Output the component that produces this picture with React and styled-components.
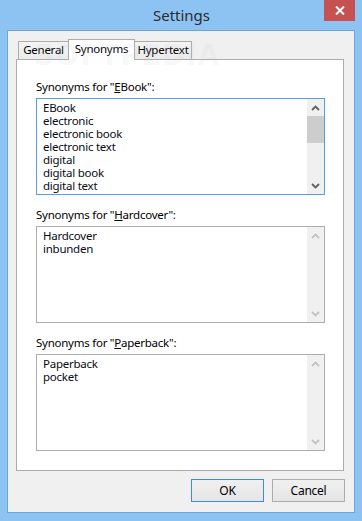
import React from 'react'
import styled, { createGlobalStyle } from 'styled-components'

const GlobalStyle = createGlobalStyle`
  html, body {
    margin: 0;
    padding: 0;
    background: #8dc3f3;
  }
  body {
    font-family: "Noto Sans", "Open Sans", sans-serif;
    font-size: 11.5px;
    letter-spacing: -0.25px;
    color: #000;
  }
`

const Window = styled.div`
  width: 362px;
  height: 521px;
  box-sizing: border-box;
  background: #8dc3f3;
  display: flex;
  flex-direction: column;
  padding: 0 7px 8px;
`

const TitleBar = styled.div`
  height: 30px;
  display: grid;
  grid-template-columns: 1fr auto 1fr;
  align-items: start;
  margin: 0 -7px;
`

const Title = styled.div`
  grid-column: 2;
  font-size: 15px;
  letter-spacing: 0;
  line-height: 30px;
  color: #2b2b2b;
  padding-left: 1px;
`

const CloseButton = styled.div`
  grid-column: 3;
  justify-self: end;
  margin-right: 7px;
  width: 31px;
  height: 21px;
  background: #c75050;
  display: flex;
  align-items: center;
  justify-content: center;
`

const Client = styled.div`
  flex: 1;
  position: relative;
  background: #f0f0f0;
  border: 1px solid #6fa4d6;
  display: flex;
  flex-direction: column;
  padding: 8px 10px 0 8px;
`

const Watermark = styled.div`
  position: absolute;
  left: 26px;
  top: 8px;
  font-family: "DejaVu Sans", sans-serif;
  font-weight: bold;
  font-size: 28px;
  letter-spacing: 1px;
  color: rgba(200, 200, 200, 0.12);
  pointer-events: none;
  z-index: 3;
`

const TabStrip = styled.div`
  height: 20px;
  display: flex;
  align-items: flex-end;
  padding-left: 2px;
`

const Tab = styled.div`
  box-sizing: border-box;
  width: ${p => p.$w}px;
  height: ${p => (p.$active ? 21 : 18)}px;
  margin-left: -1px;
  margin-bottom: ${p => (p.$active ? -1 : 0)}px;
  border: 1px solid #acacac;
  border-bottom: none;
  background: ${p => (p.$active ? '#fff' : 'linear-gradient(#f4f4f4, #ececec)')};
  position: relative;
  z-index: ${p => (p.$active ? 2 : 0)};
  display: flex;
  justify-content: center;
  line-height: ${p => (p.$active ? 17 : 16)}px;
  &:first-child {
    margin-left: 0;
  }
`

const Panel = styled.div`
  box-sizing: border-box;
  height: 412px;
  background: #fff;
  border: 1px solid #acacac;
  position: relative;
  z-index: 1;
  padding: 19px 18px 0 19px;
  display: flex;
  flex-direction: column;
`

const Label = styled.div`
  line-height: 15px;
  height: 15px;
  margin-bottom: 4px;
  white-space: nowrap;
  &:not(:first-child) {
    margin-top: 12px;
  }
`

const ListBox = styled.div`
  box-sizing: border-box;
  height: 97px;
  border: 1px solid ${p => (p.$focused ? '#569de5' : '#abadb3')};
  display: flex;
  background: #fff;
`

const Items = styled.div`
  flex: 1;
  overflow: hidden;
  padding: 2px 0 0 6px;
`

const Item = styled.div`
  line-height: 13px;
  height: 13px;
  white-space: nowrap;
  color: #0a0a14;
`

const ScrollBar = styled.div`
  width: 17px;
  background: #f0f0f0;
  display: flex;
  flex-direction: column;
`

const ArrowButton = styled.div`
  height: 17px;
  display: flex;
  align-items: center;
  justify-content: center;
`

const Track = styled.div`
  flex: 1;
  display: flex;
  flex-direction: column;
`

const Thumb = styled.div`
  height: 27px;
  background: #cdcdcd;
`

const Footer = styled.div`
  display: flex;
  justify-content: flex-end;
  gap: 8px;
  padding: 8px 0 0;
  margin-right: -1px;
`

const Button = styled.div`
  box-sizing: border-box;
  width: 73px;
  height: 23px;
  border: 1px solid ${p => (p.$default ? '#3c8ce6' : '#acacac')};
  background: linear-gradient(#f0f0f0, #e5e5e5);
  display: flex;
  align-items: center;
  justify-content: center;
  font-size: 12px;
`

const Chevron = ({ up, color }) => (
  <svg width="9" height="6" viewBox="0 0 9 6">
    <path
      d={up ? 'M1 5 L4.5 1.5 L8 5' : 'M1 1 L4.5 4.5 L8 1'}
      fill="none"
      stroke={color}
      strokeWidth="1.8"
    />
  </svg>
)

const SynonymList = ({ items, focused }) => {
  const arrow = focused ? '#606060' : '#c2c2c2'
  return (
    <ListBox $focused={focused}>
      <Items>
        {items.map(i => (
          <Item key={i}>{i}</Item>
        ))}
      </Items>
      <ScrollBar>
        <ArrowButton>
          <Chevron up color={arrow} />
        </ArrowButton>
        <Track>{focused && <Thumb />}</Track>
        <ArrowButton>
          <Chevron color={arrow} />
        </ArrowButton>
      </ScrollBar>
    </ListBox>
  )
}

const groups = [
  {
    key: 'E',
    rest: 'Book',
    focused: true,
    items: ['EBook', 'electronic', 'electronic book', 'electronic text', 'digital', 'digital book', 'digital text'],
  },
  { key: 'H', rest: 'ardcover', items: ['Hardcover', 'inbunden'] },
  { key: 'P', rest: 'aperback', items: ['Paperback', 'pocket'] },
]

const App = () => (
  <>
    <GlobalStyle />
    <Window>
      <TitleBar>
        <Title>Settings</Title>
        <CloseButton>
          <svg width="10" height="9" viewBox="0 0 10 9">
            <path d="M1 0.5 L9 8.5 M9 0.5 L1 8.5" stroke="#fff" strokeWidth="2" />
          </svg>
        </CloseButton>
      </TitleBar>
      <Client>
        <Watermark>SOFTPEDIA</Watermark>
        <TabStrip>
          <Tab $w={51}>General</Tab>
          <Tab $w={67} $active>Synonyms</Tab>
          <Tab $w={58}>Hypertext</Tab>
        </TabStrip>
        <Panel>
          {groups.map(g => (
            <React.Fragment key={g.key}>
              <Label>
                Synonyms for "<u>{g.key}</u>{g.rest}":
              </Label>
              <SynonymList items={g.items} focused={g.focused} />
            </React.Fragment>
          ))}
        </Panel>
        <Footer>
          <Button $default>OK</Button>
          <Button>Cancel</Button>
        </Footer>
      </Client>
    </Window>
  </>
)

export default App
